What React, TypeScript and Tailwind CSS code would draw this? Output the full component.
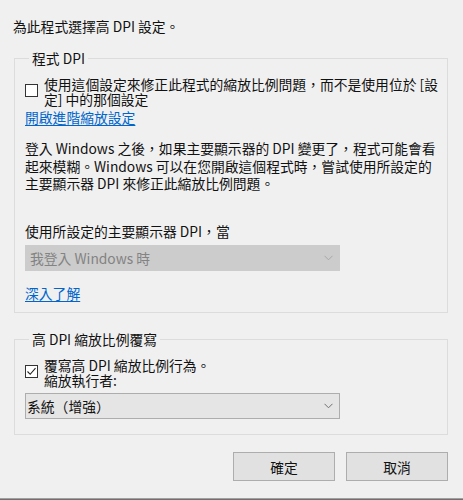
import React from "react";

function Chevron({ color }: { color: string }) {
  return (
    <svg width="9" height="6" viewBox="0 0 9 6" className="shrink-0">
      <path d="M0.5 0.8 L4.5 4.8 L8.5 0.8" fill="none" stroke={color} strokeWidth="1" />
    </svg>
  );
}

function Checkbox({ checked }: { checked?: boolean }) {
  return (
    <div className="w-[13px] h-[13px] shrink-0 bg-white border border-[#333333] flex items-center justify-center">
      {checked && (
        <svg width="11" height="11" viewBox="0 0 11 11">
          <path d="M1.5 5.5 L4.2 8.3 L9.5 2.2" fill="none" stroke="#222" strokeWidth="1.1" />
        </svg>
      )}
    </div>
  );
}

export default function App() {
  return (
    <div className="w-[463px] h-[500px] bg-[#f0f0f0] flex flex-col text-[13.8px] text-[#111] font-['Noto_Sans_CJK_TC','Noto_Sans_CJK_JP',sans-serif] overflow-hidden">
      <div className="pt-[17px] pl-[13px] leading-[18px]">為此程式選擇高 DPI 設定。</div>

      <fieldset className="mt-[14px] ml-[14px] w-[434px] border border-[#dcdcdc] pl-[10px] pb-[11px]">
        <legend className="ml-[4px] px-[3px] leading-[18px]">程式 DPI</legend>
        <div className="flex items-start mt-[10px]">
          <div className="mt-[7px]">
            <Checkbox />
          </div>
          <div className="ml-[6px] leading-[15px] whitespace-nowrap">
            <div>使用這個設定來修正此程式的縮放比例問題，而不是使用位於 [設</div>
            <div>定] 中的那個設定</div>
          </div>
        </div>
        <div className="mt-[3px] leading-[15px] text-[#0066cc] underline underline-offset-2">開啟進階縮放設定</div>
        <div className="mt-[15px] leading-[17.5px] whitespace-nowrap">
          <div>登入 Windows 之後，如果主要顯示器的 DPI 變更了，程式可能會看</div>
          <div>起來模糊。Windows 可以在您開啟這個程式時，嘗試使用所設定的</div>
          <div>主要顯示器 DPI 來修正此縮放比例問題。</div>
        </div>
        <div className="mt-[29.5px] leading-[18px]">使用所設定的主要顯示器 DPI，當</div>
        <div className="mt-[5px] w-[315px] h-[26px] bg-[#cccccc] border border-[#cccccc] flex items-center justify-between pl-[4px] pr-[6px] text-[#838383]">
          <span className="leading-[18px]">我登入 Windows 時</span>
          <Chevron color="#a8a8a8" />
        </div>
        <div className="mt-[14px] leading-[16px] text-[#0066cc] underline underline-offset-2">深入了解</div>
      </fieldset>

      <fieldset className="mt-[17px] ml-[14px] w-[434px] border border-[#dcdcdc] pl-[10px] pb-[15px]">
        <legend className="ml-[4px] px-[3px] leading-[18px]">高 DPI 縮放比例覆寫</legend>
        <div className="flex items-start mt-[10px]">
          <div className="mt-[6.5px]">
            <Checkbox checked />
          </div>
          <div className="ml-[6px] leading-[15px] whitespace-nowrap">
            <div>覆寫高 DPI 縮放比例行為。</div>
            <div>縮放執行者:</div>
          </div>
        </div>
        <div className="mt-[5px] w-[315px] h-[26px] bg-[#e5e5e5] border border-[#adadad] flex items-center justify-between pl-[1px] pr-[6px]">
          <span className="leading-[18px]">系統（增強）</span>
          <Chevron color="#707070" />
        </div>
      </fieldset>

      <div className="mt-[17px] flex justify-end gap-[11px] pr-[15px]">
        <button className="w-[102px] h-[29px] bg-[#e1e1e1] border border-[#adadad] leading-[18px]">確定</button>
        <button className="w-[102px] h-[29px] bg-[#e1e1e1] border border-[#adadad] leading-[18px]">取消</button>
      </div>

      <div className="mt-auto h-[2px] border-t border-[#a0a0a0] bg-[#707070]" />
    </div>
  );
}
